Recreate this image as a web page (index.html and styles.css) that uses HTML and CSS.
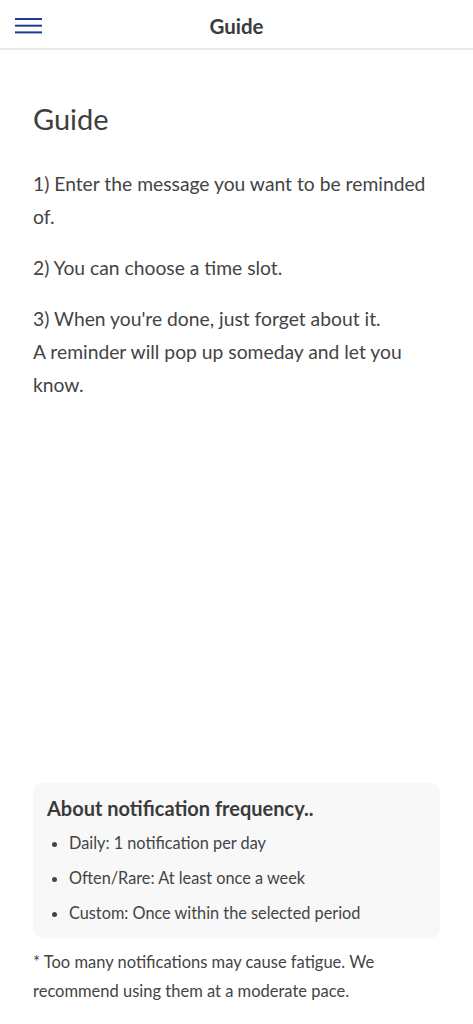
FILE: index.html
```html
<!DOCTYPE html>
<html lang="en">
<head>
<meta charset="utf-8">
<meta name="viewport" content="width=device-width, initial-scale=1">
<title>Guide</title>
<link rel="stylesheet" href="styles.css">
</head>
<body>
<div class="app">
  <header class="topbar">
    <button class="menu-btn" aria-label="Menu">
      <svg width="27" height="16" viewBox="0 0 27 16" aria-hidden="true">
        <rect x="0" y="0" width="27" height="2" fill="#1d3e8e"/>
        <rect x="0" y="6.7" width="27" height="2" fill="#1d3e8e"/>
        <rect x="0" y="13.4" width="27" height="2" fill="#1d3e8e"/>
      </svg>
    </button>
    <div class="topbar-title">Guide</div>
  </header>
  <main class="content">
    <h1 class="page-title">Guide</h1>
    <p class="step">1) Enter the message you want to be reminded of.</p>
    <p class="step">2) You can choose a time slot.</p>
    <p class="step">3) When you're done, just forget about it.<br>A reminder will pop up someday and let you know.</p>
    <section class="info-card">
      <h2 class="info-title">About notification frequency..</h2>
      <ul class="info-list">
        <li>Daily: 1 notification per day</li>
        <li>Often/Rare: At least once a week</li>
        <li>Custom: Once within the selected period</li>
      </ul>
    </section>
    <p class="footnote">* Too many notifications may cause fatigue. We recommend using them at a moderate pace.</p>
  </main>
</div>
</body>
</html>
```
FILE: styles.css
```css
* { box-sizing: border-box; }
html, body { margin: 0; padding: 0; }
body {
  font-family: "Lato", "Noto Sans", sans-serif;
  color: #444;
  background: #fff;
}
.app {
  min-height: 1024px;
  display: flex;
  flex-direction: column;
}
.topbar {
  position: relative;
  height: 50px;
  border-bottom: 2px solid #ebe8ea;
  display: flex;
  align-items: center;
  justify-content: center;
}
.menu-btn {
  position: absolute;
  left: 15px;
  top: 18px;
  padding: 0;
  border: 0;
  background: none;
  line-height: 0;
}
.topbar-title {
  font-size: 20.5px;
  font-weight: 700;
  color: #3b3b3b;
  margin-top: 3px;
}
.content {
  flex: 1;
  display: flex;
  flex-direction: column;
  padding: 47px 33px 18px;
}
.page-title {
  margin: 0 0 26px;
  font-size: 29px;
  font-weight: 400;
  color: #3e3e3e;
  line-height: 44px;
}
.step {
  margin: 0 0 17.5px;
  font-size: 19.3px;
  line-height: 33.3px;
}
.info-card {
  margin-top: auto;
  background: #f8f8f8;
  border-radius: 9px;
  padding: 10px 14px 8px;
}
.info-title {
  margin: 0 0 2px;
  font-size: 20px;
  font-weight: 700;
  color: #3a3a3a;
  line-height: 30px;
}
.info-list {
  margin: 0;
  padding-left: 22px;
  font-size: 16.3px;
  line-height: 35px;
}
.footnote {
  margin: 10px 0 0;
  font-size: 16.5px;
  line-height: 29px;
}
```
